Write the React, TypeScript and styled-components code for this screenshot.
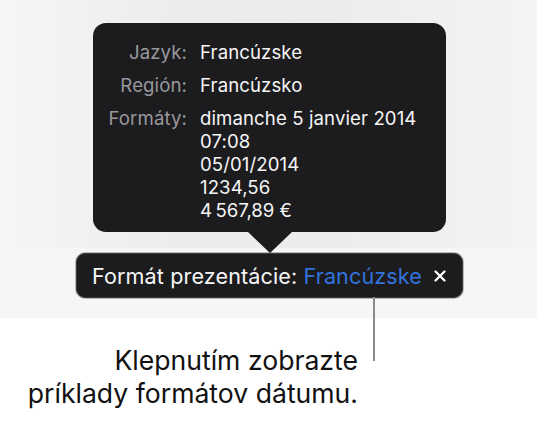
import React from "react";
import styled, { createGlobalStyle } from "styled-components";

const GlobalStyle = createGlobalStyle`
  html, body {
    margin: 0;
    padding: 0;
    background: #ffffff;
  }
  body {
    font-family: Inter, "Noto Sans", "DejaVu Sans", sans-serif;
    -webkit-font-smoothing: antialiased;
  }
`;

interface FormatRow {
  label: string;
  values: string[];
}

const rows: FormatRow[] = [
  { label: "Jazyk:", values: ["Francúzske"] },
  { label: "Región:", values: ["Francúzsko"] },
  {
    label: "Formáty:",
    values: [
      "dimanche 5 janvier 2014",
      "07:08",
      "05/01/2014",
      "1234,56",
      "4\u202f567,89 €",
    ],
  },
];

const App: React.FC = () => {
  return (
    <>
      <GlobalStyle />
      <Page>
        {/* gray screen area holding the popover */}
        <Stage>
          <Popover>
            {rows.map((row) => (
              <React.Fragment key={row.label}>
                <Label>{row.label}</Label>
                <Values>
                  {row.values.map((v) => (
                    <div key={v}>{v}</div>
                  ))}
                </Values>
              </React.Fragment>
            ))}
          </Popover>
        </Stage>

        {/* strip with the presentation format bar */}
        <Band>
          <Bar>
            <BarText>
              Formát prezentácie: <BarLink>Francúzske</BarLink>
            </BarText>
            <CloseIcon viewBox="0 0 12 12" aria-hidden>
              <path d="M1.5 1.5 L10.5 10.5 M10.5 1.5 L1.5 10.5" />
            </CloseIcon>
          </Bar>
        </Band>

        {/* callout text */}
        <Callout>
          Klepnutím zobrazte
          <br />
          príklady formátov dátumu.
        </Callout>
      </Page>
    </>
  );
};

const Page = styled.div`
  width: 537px;
  height: 422px;
  display: flex;
  flex-direction: column;
  overflow: hidden;
`;

const Stage = styled.div`
  height: 248px;
  flex-shrink: 0;
  padding: 23px 0 0 93px;
  box-sizing: border-box;
  background: linear-gradient(
    to right,
    #f6f6f6 0%,
    #ededed 30%,
    #ececec 60%,
    #f4f4f4 100%
  );
`;

const Popover = styled.div`
  position: relative;
  width: 353px;
  box-sizing: border-box;
  padding: 18px 16px 10px 0;
  background: #1c1c1e;
  border-radius: 13px;
  display: grid;
  grid-template-columns: 94px auto;
  column-gap: 13px;
  row-gap: 10px;
  font-size: 18.6px;
  line-height: 23px;
  letter-spacing: 0.1px;

  &::after {
    content: "";
    position: absolute;
    left: 155px;
    top: 100%;
    width: 0;
    height: 0;
    border-left: 22px solid transparent;
    border-right: 22px solid transparent;
    border-top: 21px solid #1c1c1e;
  }
`;

const Label = styled.div`
  color: #98989d;
  text-align: right;
`;

const Values = styled.div`
  color: #f5f5f5;
`;

const Band = styled.div`
  height: 70px;
  flex-shrink: 0;
  background: #f6f6f6;
  padding: 5px 0 0 76px;
  box-sizing: border-box;
`;

const Bar = styled.div`
  position: relative;
  width: 387px;
  height: 45px;
  box-sizing: border-box;
  padding: 0 16px 0 15px;
  display: flex;
  align-items: center;
  justify-content: space-between;
  background: #1c1c1e;
  border: 1px solid #3a3a3c;
  border-radius: 9px;
  box-shadow: 0 0 0 1px rgba(0, 0, 0, 0.25);

  &::after {
    content: "";
    position: absolute;
    left: 296px;
    top: 100%;
    width: 2px;
    height: 64px;
    background: #8a8a8a;
  }
`;

const BarText = styled.span`
  color: #f5f5f5;
  font-size: 21.6px;
  letter-spacing: 0.1px;
  white-space: nowrap;
`;

const BarLink = styled.span`
  color: #3273dc;
`;

const CloseIcon = styled.svg`
  width: 12px;
  height: 12px;
  flex-shrink: 0;
  stroke: #ffffff;
  stroke-width: 2.2;
  stroke-linecap: round;
  fill: none;
`;

const Callout = styled.div`
  width: 358px;
  padding-top: 26px;
  text-align: right;
  color: #111111;
  font-size: 26.6px;
  line-height: 33px;
  background: #ffffff;
  flex: 1;
`;

export default App;
